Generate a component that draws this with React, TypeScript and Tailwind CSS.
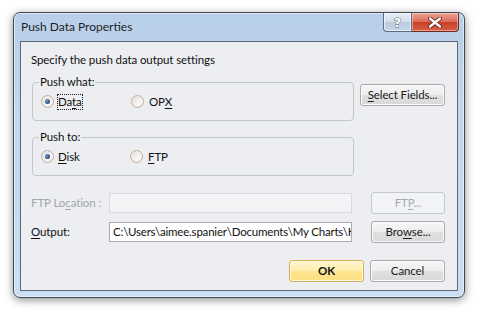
import React from "react";

const font = { fontFamily: 'Lato, "Noto Sans", sans-serif' };

function Radio({ checked }: { checked?: boolean }) {
  return (
    <span className="relative flex h-[13px] w-[13px] shrink-0 items-center justify-center rounded-full border border-[#c3ad9c] bg-[linear-gradient(135deg,#dcdcdc_0%,#f4f4f4_60%,#ffffff_100%)] shadow-[inset_0_0_0_1px_#f2ede8]">
      {checked && (
        <span className="h-[5px] w-[5px] rounded-full bg-[radial-gradient(circle_at_35%_35%,#7a9acb_0%,#27457a_70%,#1c3560_100%)]" />
      )}
    </span>
  );
}

function Btn({
  children,
  className = "",
  disabled,
}: {
  children: React.ReactNode;
  className?: string;
  disabled?: boolean;
}) {
  return (
    <div
      className={
        "flex h-[22px] items-center justify-center rounded-[3px] border leading-none " +
        (disabled
          ? "border-[#c5c8cb] bg-[#f2f3f5] text-[#a4a8ad] "
          : "border-[#a9a9a9] bg-[linear-gradient(to_bottom,#f6f6f6_0%,#ededed_50%,#e0e0e0_51%,#d9d9d9_100%)] text-[#1a1a1a] shadow-[inset_0_0_0_1px_#fbfbfb] ") +
        className
      }
    >
      {children}
    </div>
  );
}

function Group({
  label,
  className = "",
  children,
}: {
  label: string;
  className?: string;
  children: React.ReactNode;
}) {
  return (
    <div
      className={
        "relative flex h-[39px] w-[322px] shrink-0 items-center rounded-[4px] border border-[#c2c6ca] pl-[8px] " +
        className
      }
    >
      <span className="absolute -top-[9px] left-[6px] bg-[#eceef1] px-[1px] leading-[16px]">
        {label}
      </span>
      {children}
    </div>
  );
}

export default function App() {
  return (
    <div className="h-[318px] w-[484px] overflow-hidden bg-white pl-[13px] pt-[12px]" style={font}>
      <div className="flex h-[286px] w-[452px] flex-col rounded-[7px] border border-[#3e4957] bg-[linear-gradient(180deg,#b8cfe9_0%,#c2d6ed_35%,#c6daef_70%,#cbdef2_100%)] shadow-[0_2px_9px_rgba(0,0,0,0.45),inset_0_0_0_1px_rgba(255,255,255,0.55)]">
        {/* title bar */}
        <div className="flex h-[28px] items-start justify-between">
          <span className="pl-[7px] pt-[6px] text-[12px] leading-[16px] text-[#1e1e1e]">
            Push Data Properties
          </span>
          <div className="mr-[5px] flex">
            <div className="flex h-[19px] w-[29px] items-center justify-center rounded-bl-[4px] border border-t-0 border-[#5b6b80] bg-[linear-gradient(to_bottom,#e5edf6_0%,#d2deec_50%,#bccbdf_51%,#c6d5e7_100%)] shadow-[inset_0_0_0_1px_rgba(255,255,255,0.6)]">
              <span
                className="text-[13px] font-bold leading-none text-white"
                style={{ WebkitTextStroke: "0.8px #4a5566", paintOrder: "stroke fill", fontFamily: '"DejaVu Sans", sans-serif' }}
              >
                ?
              </span>
            </div>
            <div className="flex h-[19px] w-[47px] items-center justify-center rounded-br-[4px] border border-l-0 border-t-0 border-[#6b2a22] bg-[linear-gradient(to_bottom,#eba595_0%,#dc6a55_50%,#c8402a_51%,#d75f45_100%)] shadow-[inset_0_0_0_1px_rgba(255,220,210,0.5)]">
              <svg width="14" height="11" viewBox="0 0 14 11">
                <path d="M2 1.5 L12 9.5 M12 1.5 L2 9.5" stroke="#5a1e16" strokeWidth="4" strokeLinecap="round" />
                <path d="M2 1.5 L12 9.5 M12 1.5 L2 9.5" stroke="#ffffff" strokeWidth="2.4" strokeLinecap="round" />
              </svg>
            </div>
          </div>
        </div>

        {/* client area */}
        <div className="mx-[6px] flex flex-col border border-[#5d6978] bg-[#eceef1] pb-[8px] pl-[10px] pr-[12px] pt-[10px] text-[11.5px] leading-[16px] tracking-[-0.1px] text-[#111]">
          <div className="h-[16px]">Specify the push data output settings</div>

          <div className="mt-[14px] flex items-start">
            <Group label="Push what:" className="ml-[1px]">
              <div className="flex w-[90px] items-center gap-[4px]">
                <Radio checked />
                <span className="outline-1 outline-dotted outline-[#222] leading-[14px]">
                  Da<u className="underline-offset-2">t</u>a
                </span>
              </div>
              <div className="flex items-center gap-[5px]">
                <Radio />
                <span>
                  OP<u className="underline-offset-2">X</u>
                </span>
              </div>
            </Group>
            <Btn className="ml-[6px] mt-[2px] w-[86px]">
              <span>
                <u className="underline-offset-2">S</u>elect Fields...
              </span>
            </Btn>
          </div>

          <Group label="Push to:" className="ml-[1px] mt-[16px]">
            <div className="flex w-[89px] items-center gap-[4px]">
              <Radio checked />
              <span>
                <u className="underline-offset-2">D</u>isk
              </span>
            </div>
            <div className="flex items-center gap-[5px]">
              <Radio />
              <span>
                <u className="underline-offset-2">F</u>TP
              </span>
            </div>
          </Group>

          <div className="mt-[16px] flex h-[22px] items-center">
            <span className="w-[78px] text-[#a2a6ab]">
              FTP Lo<u className="underline-offset-2">c</u>ation :
            </span>
            <div className="h-[20px] w-[243px] border border-[#d8dadd] bg-[#f3f4f6]" />
            <Btn disabled className="ml-auto w-[74px]">
              <span>
                FT<u className="underline-offset-2">P</u>...
              </span>
            </Btn>
          </div>

          <div className="mt-[7px] flex h-[22px] items-center">
            <span className="w-[78px]">
              <u className="underline-offset-2">O</u>utput:
            </span>
            <div className="flex h-[20px] w-[243px] items-center overflow-hidden border border-[#abadb3] bg-white pl-[3px] text-[#111]">
              <span className="block overflow-hidden whitespace-nowrap tracking-[-0.2px]">C:\Users\aimee.spanier\Documents\My Charts\He</span>
            </div>
            <Btn className="ml-auto w-[74px]">
              <span>
                Bro<u className="underline-offset-2">w</u>se...
              </span>
            </Btn>
          </div>

          <div className="mt-[17px] flex h-[22px] justify-end gap-[6px]">
            <div className="flex h-[22px] w-[75px] items-center justify-center rounded-[3px] border border-[#d5b05a] bg-[linear-gradient(to_bottom,#fff6cf_0%,#feeeaa_50%,#fde48e_51%,#fddf82_100%)] font-bold leading-none text-[#111] shadow-[inset_0_0_0_1px_#fff8e0]">
              OK
            </div>
            <Btn className="w-[75px]">Cancel</Btn>
          </div>
        </div>
      </div>
    </div>
  );
}
